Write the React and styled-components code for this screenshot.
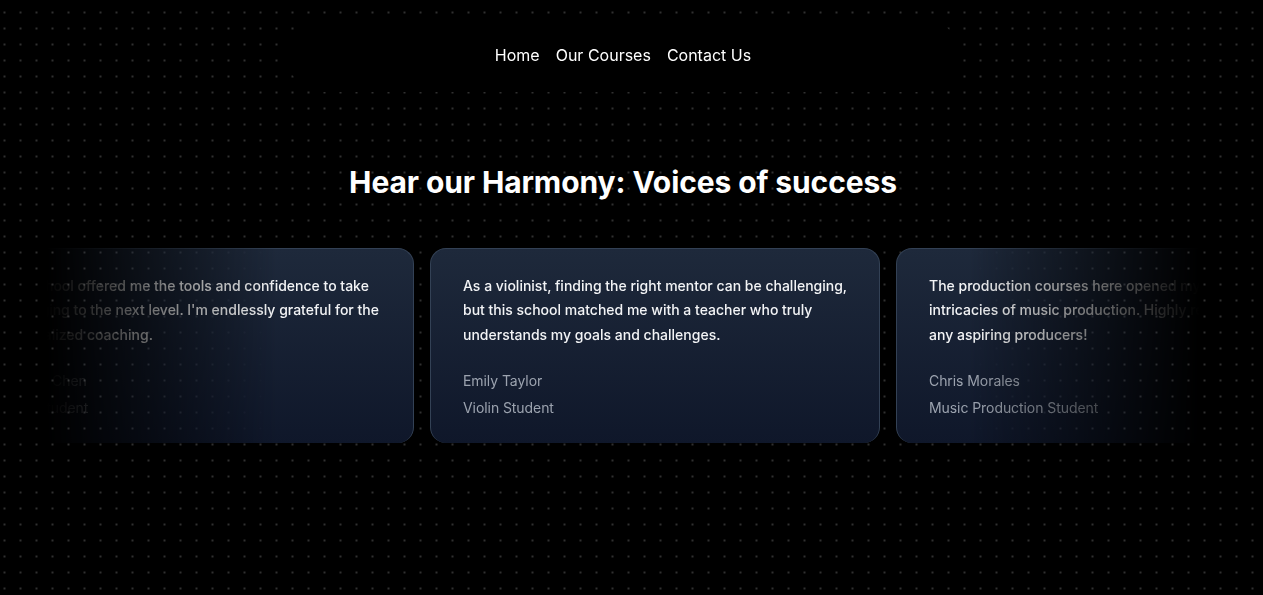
import React from 'react';
import styled, { createGlobalStyle } from 'styled-components';

const GlobalStyle = createGlobalStyle`
  html, body {
    margin: 0;
    padding: 0;
    background: #000;
    overflow: hidden;
  }
  body {
    font-family: Inter, "Noto Sans", sans-serif;
    color: #fff;
    line-height: 1.5;
  }
  * {
    box-sizing: border-box;
  }
`;

const Page = styled.div`
  position: relative;
  height: 595px;
  background-color: #000;
  background-image: radial-gradient(circle, rgba(255, 255, 255, 0.19) 0.9px, transparent 1.3px);
  background-size: 16px 16px;
  background-position: -3.5px 4.5px;
  overflow: hidden;
`;

// content column sits as if a scrollbar were present
const Content = styled.div`
  margin-right: 17px;
`;

const NavBar = styled.nav`
  position: fixed;
  top: 18px;
  left: 0;
  right: 17px;
  max-width: 672px;
  margin: 0 auto;
  z-index: 50;
`;

const Menu = styled.div`
  display: flex;
  justify-content: center;
  gap: 16px;
  padding: 24px 32px;
  border-radius: 9999px;
  border: 1px solid transparent;
  background: #000;
`;

const MenuItem = styled.a`
  font-size: 16px;
  line-height: 24px;
  color: #fff;
  text-decoration: none;
  cursor: pointer;
`;

const Section = styled.section`
  display: flex;
  flex-direction: column;
  align-items: center;
  padding-top: 164px;
`;

const Heading = styled.h2`
  margin: 0 0 32px;
  font-size: 30px;
  line-height: 36px;
  font-weight: 700;
  letter-spacing: -0.1px;
  text-align: center;
  color: #fff;
`;

const ScrollerWrap = styled.div`
  display: flex;
  justify-content: center;
  width: 100%;
  padding: 0 32px;
`;

const Scroller = styled.div`
  width: 100%;
  max-width: 1152px;
  overflow: hidden;
  -webkit-mask-image: linear-gradient(to right, transparent, #fff 20%, #fff 80%, transparent);
  mask-image: linear-gradient(to right, transparent, #fff 20%, #fff 80%, transparent);
`;

const Track = styled.ul`
  display: flex;
  flex-wrap: nowrap;
  gap: 16px;
  width: max-content;
  margin: 0;
  padding: 16px 0;
  list-style: none;
  transform: translateX(${(p) => p.$offset}px);
`;

const Card = styled.li`
  flex-shrink: 0;
  width: 450px;
  border-radius: 16px;
  border: 1px solid #334155;
  border-bottom: 0;
  padding: 24px 32px;
  background: linear-gradient(180deg, #1e293b, #0f172a);
`;

const Quote = styled.blockquote`
  margin: 0;
`;

const QuoteText = styled.span`
  font-size: 14px;
  line-height: 1.6;
  color: #f3f4f6;
  font-weight: 500;
`;

const Author = styled.div`
  display: flex;
  flex-direction: column;
  gap: 4px;
  margin-top: 24px;
`;

const AuthorLine = styled.span`
  font-size: 14px;
  line-height: 1.6;
  color: #9ca3af;
  font-weight: 400;
  letter-spacing: -0.07px;
`;

const testimonials = [
  {
    quote:
      'Joining the music school transformed my understanding of music and helped me to truly discover my own sound. The instructors are world-class!',
    name: 'Alex Johnson',
    title: 'Guitar Student',
  },
  {
    quote:
      "The community and support at this school are unmatched. I've grown not just as a pianist, but also as a performer, thanks to their comprehensive approach.",
    name: 'Samantha Lee',
    title: 'Piano Student',
  },
  {
    quote:
      "This school offered me the tools and confidence to take my singing to the next level. I'm endlessly grateful for the personalized coaching.",
    name: 'Michael Chen',
    title: 'Vocal Student',
  },
  {
    quote:
      'As a violinist, finding the right mentor can be challenging, but this school matched me with a teacher who truly understands my goals and challenges.',
    name: 'Emily Taylor',
    title: 'Violin Student',
  },
  {
    quote:
      'The production courses here opened my eyes to the intricacies of music production. Highly recommend to any aspiring producers!',
    name: 'Chris Morales',
    title: 'Music Production Student',
  },
];

function TestimonialCard({ item }) {
  return (
    <Card>
      <Quote>
        <QuoteText>{item.quote}</QuoteText>
        <Author>
          <AuthorLine>{item.name}</AuthorLine>
          <AuthorLine>{item.title}</AuthorLine>
        </Author>
      </Quote>
    </Card>
  );
}

export default function App() {
  const items = [...testimonials, ...testimonials];
  return (
    <>
      <GlobalStyle />
      <Page>
        <NavBar>
          <Menu>
            <MenuItem>Home</MenuItem>
            <MenuItem>Our Courses</MenuItem>
            <MenuItem>Contact Us</MenuItem>
          </Menu>
        </NavBar>
        <Content>
          <Section>
            <Heading>Hear our Harmony: Voices of success</Heading>
            <ScrollerWrap>
              <Scroller>
                <Track $offset={-1015}>
                  {items.map((item, i) => (
                    <TestimonialCard key={item.name + i} item={item} />
                  ))}
                </Track>
              </Scroller>
            </ScrollerWrap>
          </Section>
        </Content>
      </Page>
    </>
  );
}
